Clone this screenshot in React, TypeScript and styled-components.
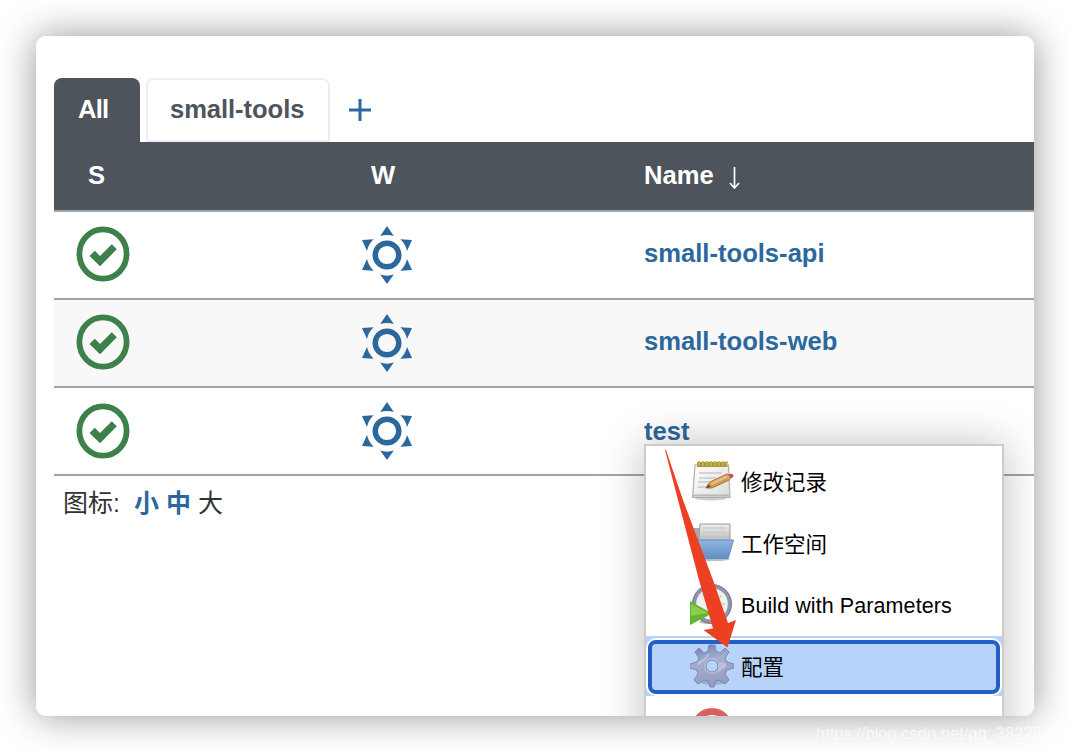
import React from "react";
import styled, { createGlobalStyle, css } from "styled-components";

const Global = createGlobalStyle`
  * { box-sizing: border-box; }
  html, body { margin: 0; background: #fff; }
  body { width: 1070px; height: 752px; overflow: hidden; font-family: "Liberation Sans", "Noto Sans CJK SC", sans-serif; }
`;

const Desktop = styled.div`
  position: relative;
  width: 1070px;
  height: 752px;
  padding: 36px;
  overflow: hidden;
`;

const Window = styled.main`
  position: relative;
  height: 680px;
  padding: 42px 0 0 18px;
  border-radius: 10px;
  overflow: hidden;
  background: #fff;
`;

const WindowShadow = styled.div`
  height: 680px;
  border-radius: 10px;
  box-shadow: 0 0 38px rgba(0, 0, 0, 0.42);
`;

const Tabs = styled.nav`
  display: flex;
  height: 64px;
  gap: 6px;
`;

const Tab = styled.a<{ $active?: boolean }>`
  height: 64px;
  width: ${(p) => (p.$active ? 86 : 184)}px;
  padding: ${(p) => (p.$active ? "0 0 0 24px" : "0 0 0 22px")};
  border: 2px solid #ebeff3;
  border-radius: 8px 8px 0 0;
  line-height: 59px;
  font-size: 25.6px;
  font-weight: 700;
  letter-spacing: -0.07px;
  color: #4d545c;
  white-space: nowrap;
  ${(p) =>
    p.$active &&
    css`
      border: 0;
      background: #4d545c;
      color: #fff;
      line-height: 63px;
      letter-spacing: -0.8px;
    `}
`;

const AddTab = styled.svg`
  width: 22px;
  height: 22px;
  margin: 21px 0 0 13px;
`;

const Row = styled.div<{ $shade?: boolean }>`
  display: grid;
  grid-template-columns: 284px 306px 1fr;
  align-items: center;
  height: 88px;
  border-bottom: 2px solid #9ba5ae;
  background: ${(p) => (p.$shade ? "#f8f8f8" : "#fff")};
`;

const HeadRow = styled(Row)`
  height: 70px;
  background: #4d545c;
  color: #fff;
  font-size: 25.6px;
  font-weight: 700;
`;

const Heading = styled.div<{ $inset: number }>`
  display: flex;
  align-items: center;
  gap: 15px;
  padding: 0 0 2px ${(p) => p.$inset}px;
  line-height: 66px;
`;

const SortArrow = styled.svg`
  width: 11px;
  height: 24px;
  margin-top: 5px;
`;

const IconCell = styled.div<{ $inset: number; $shift?: number }>`
  display: flex;
  padding-left: ${(p) => p.$inset}px;
  margin-top: ${(p) => p.$shift ?? 0}px;
`;

const JobLink = styled.a<{ $lift: number }>`
  padding-bottom: ${(p) => p.$lift}px;
  color: #2d689c;
  font-size: 25.6px;
  font-weight: 700;
  white-space: nowrap;
`;

const SizeBar = styled.div`
  display: flex;
  height: 54px;
  padding-left: 9px;
  line-height: 54px;
  font-size: 25px;
  color: #333;
`;

const SizeLabel = styled.span`
  width: 71px;
`;

const SizeOption = styled.span<{ $link?: boolean }>`
  width: 32px;
  color: ${(p) => (p.$link ? "#2d689c" : "#333")};
  font-weight: ${(p) => (p.$link ? 600 : 400)};
`;

const Menu = styled.div`
  position: absolute;
  left: 608px;
  top: 408px;
  width: 360px;
  height: 330px;
  padding-top: 4px;
  border: 2px solid #ccc;
  background: #fff;
  box-shadow: 0 0 40px rgba(0, 0, 0, 0.25);
`;

const MenuItem = styled.div<{ $selected?: boolean }>`
  height: 60px;
  margin-bottom: 2px;
  padding: 2px 0;
  background: ${(p) => (p.$selected ? "#b7d3fa" : "transparent")};
`;

const MenuInner = styled.div<{ $selected?: boolean }>`
  display: flex;
  align-items: center;
  gap: 7px;
  height: 56px;
  padding-left: 44px;
  font-size: 21.5px;
  color: #000;
  white-space: nowrap;
  ${(p) =>
    p.$selected &&
    css`
      height: 54px;
      margin: 2px;
      padding: 0 0 4px 38px;
      border: 4px solid #2360c5;
      border-radius: 8px;
      box-shadow: 0 0 0 2px #fff;
    `}
`;

const MenuLabel = styled.span<{ $drop?: number }>`
  padding-top: ${(p) => p.$drop ?? 0}px;
  letter-spacing: ${(p) => (p.$drop ? 0.08 : 0)}px;
`;

const MenuIcon = styled.svg`
  flex: none;
  width: 44px;
  height: 48px;
`;

const Pointer = styled.svg`
  position: absolute;
  left: 660px;
  top: 446px;
  width: 80px;
  height: 204px;
`;

const Watermark = styled.div`
  position: absolute;
  left: 816px;
  top: 723px;
  color: rgba(255, 255, 255, 0.7);
  font-size: 16.5px;
  line-height: 20px;
  white-space: nowrap;
`;

const ShadowLayer = styled.div`
  position: absolute;
  inset: 36px;
`;

function Success() {
  return (
    <svg width="54" height="56" viewBox="0 0 54 56">
      <ellipse cx="27" cy="28" rx="23.6" ry="24.6" fill="none" stroke="#3d8049" strokeWidth="5.8" />
      <path d="M13.5 30 L18.8 24.8 L24 30 L35.8 18.2 L40.8 23.2 L24 40.2 Z" fill="#3d8049" />
    </svg>
  );
}

function Sun() {
  return (
    <svg width="50" height="58" viewBox="0 0 50 58" fill="#2d689c">
      <circle cx="25" cy="29" r="11.8" fill="none" stroke="#2d689c" strokeWidth="5.4" />
      <path d="M25 0 L31.8 10 Q25 7.8 18.2 10Z M25 58 L31.8 48.6 Q25 50.8 18.2 48.6Z M0 14 L11.6 13.3 Q6.6 18 5 25Z M50 14 L38.4 13.3 Q43.4 18 45 25Z M0 44 L5 33 Q6.6 40 11.6 44.7Z M50 44 L45 33 Q43.4 40 38.4 44.7Z" />
    </svg>
  );
}

function Notepad() {
  return (
    <MenuIcon viewBox="0 0 44 48">
      <defs>
        <linearGradient id="paper" x2="1" y2="1">
          <stop stopColor="#fff" />
          <stop offset="1" stopColor="#dcdcdc" />
        </linearGradient>
      </defs>
      <ellipse cx="21" cy="42" rx="16" ry="2.5" fill="#ccc" />
      <path d="M5 9 H38.5 L40 41.5 H2.5Z" fill="url(#paper)" stroke="#b0b0b0" strokeWidth="1.2" />
      <path d="M3 39.5H39.5" stroke="#b8b8b8" strokeWidth="2" />
      <path d="M7 6H37.5V11H7Z" fill="#a69836" />
      <path d="M9 5v5M13 5v5M17 5v5M21 5v5M25 5v5M29 5v5M33 5v5M36.5 5v5" stroke="#c5b647" strokeWidth="1.8" />
      <path d="M9 17H32M9 22H26M8 26H22M8 31H18" stroke="#c9c9c9" strokeWidth="1.3" />
      <path d="M16 32 L20 26 L37 18 L42 21 L39 24 L22 32Z" fill="#d59a4f" stroke="#93602f" strokeWidth=".8" />
      <path d="M20 27 L37 19 L39 21 L22 29Z" fill="#ebbd78" />
      <path d="M16 32L18 28L21 31Z" fill="#79532f" />
      <path d="M38 19 L40 17.8 Q44 18 43.5 20.5 L41 22.5Z" fill="#d94e4c" />
      <path d="M36.5 19 L39.5 23" stroke="#b5b5a8" strokeWidth="2" />
    </MenuIcon>
  );
}

function Folder() {
  return (
    <MenuIcon viewBox="0 -2 44 48">
      <defs>
        <linearGradient id="folder" x2="0" y2="1">
          <stop stopColor="#91b6df" />
          <stop offset="1" stopColor="#618fc8" />
        </linearGradient>
        <linearGradient id="sheet" x2="0" y2="1">
          <stop stopColor="#eee" />
          <stop offset="1" stopColor="#a8a8a8" />
        </linearGradient>
      </defs>
      <ellipse cx="22" cy="39" rx="18" ry="2" fill="#bbb" />
      <path d="M3 8 H13 L18 12 H38 V37H3Z" fill="#aaa" />
      <path d="M10 4H40V27H8Z" fill="url(#sheet)" stroke="#999" />
      <path d="M13 8H36M13 12H36" stroke="#c4c4c4" />
      <path d="M4 20 H43.5 L38.5 37.5 Q38 38.5 36 38.5 H4Z" fill="url(#folder)" stroke="#608fc4" />
    </MenuIcon>
  );
}

function BuildClock() {
  return (
    <MenuIcon viewBox="0 -2 44 48">
      <ellipse cx="22" cy="40" rx="13" ry="2" fill="#bbb" />
      <circle cx="22" cy="22" r="17.8" fill="#f0f0ee" stroke="#9293ad" strokeWidth="4" />
      <circle cx="22" cy="22" r="19.4" fill="none" stroke="#77798f" strokeWidth="1" />
      <path d="M23 9v3M35 22h-3M31.5 13.5l-2 2M12 12l2 2" stroke="#d6d4c8" strokeWidth="2" />
      <path d="M0 19 L22 31.5 L0 43Z" fill="#63b52b" />
      <path d="M1 22 L18 31 L1 34Z" fill="#8ccc53" />
    </MenuIcon>
  );
}

function Gear() {
  return (
    <MenuIcon viewBox="0 0 44 48">
      <defs>
        <linearGradient id="gear" x2=".3" y2="1">
          <stop stopColor="#677dac" />
          <stop offset=".45" stopColor="#a5add1" />
          <stop offset="1" stopColor="#989dbe" />
        </linearGradient>
      </defs>
      <ellipse cx="23" cy="40" rx="14" ry="4" fill="#8da7d1" opacity=".8" />
      <path
        d="M19 4 L25 4 L26 10 L30 12 L35 7 L39 11 L35 17 L37 21 L44 23 L44 27 L37 29 L35 33 L39 39 L35 43 L29 39 L26 40 L24 46 L20 46 L18 40 L14 39 L8 43 L4 39 L8 33 L7 29 L0 27 L0 23 L7 21 L9 17 L5 11 L9 7 L14 12 L18 10Z M22 19 A6 6 0 1 0 22 31 A6 6 0 1 0 22 19Z"
        fill="url(#gear)"
        fillRule="evenodd"
        stroke="#7f86ab"
        strokeWidth="1"
        strokeLinejoin="round"
      />
      <path d="M8 21 Q15 18 16 14 L20 12 Q16 20 8 24Z M28 22 Q34 20 36 23 L36 26 Q31 28 29 32Z" fill="#c7c9e2" opacity=".75" />
      <circle cx="22" cy="25" r="7.2" fill="none" stroke="#b9bedc" strokeWidth="1.3" />
    </MenuIcon>
  );
}

function Forbidden() {
  return (
    <MenuIcon viewBox="0 -1 44 48">
      <circle cx="22" cy="24" r="17.5" fill="#fff" stroke="#d8615e" strokeWidth="7" />
      <path d="M10 12L34 36" stroke="#d8615e" strokeWidth="6" />
    </MenuIcon>
  );
}

const jobs = [
  { name: "small-tools-api", shade: false, lift: 3, iconShift: -2 },
  { name: "small-tools-web", shade: true, lift: 3, iconShift: -2 },
  { name: "test", shade: false, lift: 0, iconShift: 0 },
];

const actions = [
  { label: "修改记录", Icon: Notepad },
  { label: "工作空间", Icon: Folder },
  { label: "Build with Parameters", Icon: BuildClock, drop: 5 },
  { label: "配置", Icon: Gear, selected: true },
  { label: "", Icon: Forbidden },
];

export default function App() {
  return (
    <>
      <Global />
      <Desktop>
        <ShadowLayer>
          <WindowShadow />
        </ShadowLayer>
        <Window>
          <Tabs>
            <Tab $active>All</Tab>
            <Tab>small-tools</Tab>
            <AddTab viewBox="0 0 22 22">
              <path d="M0 11H22M11 0V22" stroke="#2d689c" strokeWidth="3" />
            </AddTab>
          </Tabs>
          <HeadRow>
            <Heading $inset={34}>S</Heading>
            <Heading $inset={33}>W</Heading>
            <Heading $inset={0}>
              Name
              <SortArrow viewBox="0 0 11 24">
                <path d="M5.5 1V22M1 17L5.5 22L10 17" fill="none" stroke="#fff" strokeWidth="1.7" />
              </SortArrow>
            </Heading>
          </HeadRow>
          {jobs.map((job) => (
            <Row key={job.name} $shade={job.shade}>
              <IconCell $inset={22} $shift={job.iconShift}>
                <Success />
              </IconCell>
              <IconCell $inset={23.5}>
                <Sun />
              </IconCell>
              <JobLink $lift={job.lift}>{job.name}</JobLink>
            </Row>
          ))}
          <SizeBar>
            <SizeLabel>图标:</SizeLabel>
            <SizeOption $link>小</SizeOption>
            <SizeOption $link>中</SizeOption>
            <SizeOption>大</SizeOption>
          </SizeBar>
          <Menu>
            {actions.map(({ label, Icon, selected, drop }, i) => (
              <MenuItem key={i} $selected={selected}>
                <MenuInner $selected={selected}>
                  <Icon />
                  <MenuLabel $drop={drop}>{label}</MenuLabel>
                </MenuInner>
              </MenuItem>
            ))}
          </Menu>
        </Window>
        <Pointer viewBox="660 446 80 204">
          <path d="M665 450 L666 450 L683 500 L713 580 L728 623 L736 620 L727.5 647.5 L703.5 630 L713 628.5 L699 580 L678 500Z" fill="#ed4023" />
        </Pointer>
        <Watermark>https://blog.csdn.net/qq_38225558</Watermark>
      </Desktop>
    </>
  );
}
